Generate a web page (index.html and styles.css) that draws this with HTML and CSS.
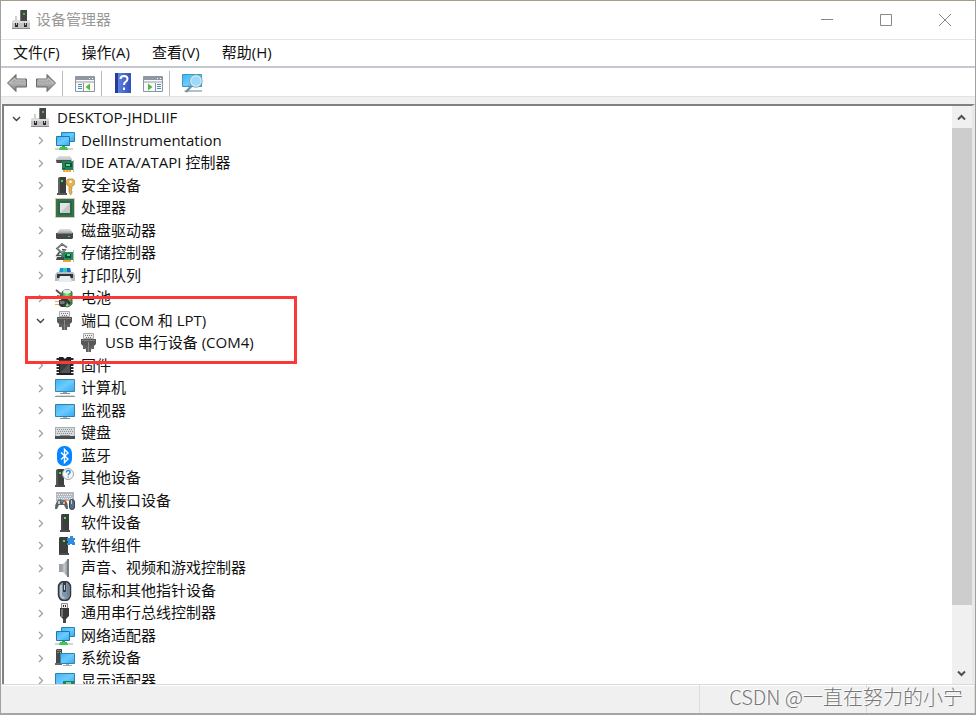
FILE: index.html
```html
<!DOCTYPE html>
<html lang="zh-CN">
<head>
<meta charset="utf-8">
<title>设备管理器</title>
<link rel="stylesheet" href="styles.css">
</head>
<body>
<svg class="sprite" aria-hidden="true">
  <defs>
    <linearGradient id="blue" x1="0" y1="0" x2="1" y2="1"><stop offset="0" stop-color="#3db4f6"/><stop offset=".5" stop-color="#6bcbff"/><stop offset="1" stop-color="#35a9f2"/></linearGradient>
    <linearGradient id="steel" x1="0" y1="0" x2="1" y2="0"><stop offset="0" stop-color="#7b8187"/><stop offset=".6" stop-color="#c3c8cc"/><stop offset="1" stop-color="#878d92"/></linearGradient>
    <linearGradient id="silver" x1="0" y1="0" x2="0" y2="1"><stop offset="0" stop-color="#e0e1e2"/><stop offset="1" stop-color="#a3a6a9"/></linearGradient>
    <linearGradient id="arrow" x1="0" y1="0" x2="0" y2="1"><stop offset="0" stop-color="#777"/><stop offset=".5" stop-color="#b5b5b5"/><stop offset="1" stop-color="#777"/></linearGradient>
    <linearGradient id="book" x1="0" y1="0" x2="1" y2="0"><stop offset="0" stop-color="#243c9c"/><stop offset=".2" stop-color="#5b80e2"/><stop offset="1" stop-color="#3152b8"/></linearGradient>
    <linearGradient id="leaf" x1="0" y1="0" x2="1" y2="0"><stop offset="0" stop-color="#2f9e31"/><stop offset=".5" stop-color="#8be886"/><stop offset="1" stop-color="#239026"/></linearGradient>
  </defs>
  <symbol id="i-root" viewBox="0 0 20 20">
    <path d="M3 6h2v5H3z" fill="#cfcfcf"/><path d="M1 10h16l1 3v6H0v-6z" fill="#c3c3c6"/><path d="M1 10h16l1 3H0z" fill="#dcdcde"/><path d="M0 18h18v1H0z" fill="#8b8b8d"/>
    <path d="M8 1l1-1h6v11H8z" fill="#454545"/><path d="M8 1l1-1v11H8z" fill="#777"/><path d="M11 3h2v2h-2z" fill="#31c14c"/>
    <path d="M3 13h1v2h1v-2h1v4H3zM12 13h1v2h1v-2h1v4h-3z" fill="#2c2c2c"/>
  </symbol>
  <symbol id="i-net" viewBox="0 0 20 20">
    <path d="M6.500 1.500h13v9h-13z" fill="url(#blue)" stroke="#2683b8"/>
    <path d="M1.500 5.500h13v9h-13z" fill="url(#blue)" stroke="#2277a8"/><path d="M7 15h3v2H7z" fill="#3ba940"/><path d="M0 17h18v2H0z" fill="#d2d4d5"/><path d="M5 16h7l1 3H4z" fill="#40c74a"/>
  </symbol>
  <symbol id="i-ide" viewBox="0 0 20 20">
    <path d="M1 6l3-3h11l2 3v4H1z" fill="url(#silver)"/><path d="M1 7h15v3H2z" fill="#4b4d4f"/><path d="M7 8h11v9H7z" fill="#21825b"/><path d="M18 7h1v12h-1z" fill="#b8bdb9"/><path d="M10 10h7v4h-7zM8 15h2v1H8z" fill="#075438"/><path d="M11 11h4v2h-4z" fill="#66d59a"/><path d="M8 17h8v2H8z" fill="#f4a228"/><path d="M10 17h1v2h-1zM13 17h1v2h-1z" fill="#fbd074"/>
  </symbol>
  <symbol id="i-security" viewBox="0 0 20 20">
    <path d="M3 2l2-1h6v17H3z" fill="#3d3d3e"/><path d="M4 2v15" stroke="#858585"/><path d="M6 4h2v2H6z" fill="#38e749"/><path d="M2 17h10v2H2z" fill="#575758"/><path d="M15.500 3a3.500 3.500 0 0 0-1.500 7v6l1.500 3 1.500-2v-2l-1-1 1-1v-3a3.500 3.500 0 0 0-1.500-7z" fill="#e5b354" stroke="#ad7c24" stroke-width=".6"/><circle cx="15.500" cy="5.800" r="1.300" fill="#fff"/>
  </symbol>
  <symbol id="i-cpu" viewBox="0 0 20 20">
    <path d="M.5.5h19v19H.5z" fill="#fff" stroke="#b99948" stroke-dasharray="1 1"/><path d="M1 1h18v18H1z" fill="#347152"/><path d="M3 3h14v14H3z" fill="#28674a"/><path d="M5 5h10v10H5z" fill="#e3e5e4"/><path d="M5 15L15 5v10z" fill="#c5cac7"/>
  </symbol>
  <symbol id="i-disk" viewBox="0 0 20 20">
    <path d="M2 12l3-4h10l3 4z" fill="url(#silver)"/><path d="M1 12h17v5l-1 1H2l-1-1z" fill="#454748"/><path d="M2 12h15v1H2z" fill="#77797b"/><path d="M13 15h2v1h-2z" fill="#38d653"/>
  </symbol>
  <symbol id="i-storage" viewBox="0 0 20 20">
    <path d="M12 4.500L7 1 2 5.500 7 10l3-3-3-.5M5 8.500l-3 4h4" fill="none" stroke="#505355" stroke-width="1.700"/><path d="M12 4.500L7 1 2 5.500 7 10l3-3" fill="none" stroke="#d7d9da" stroke-width=".5"/><path d="M6 12l3-3h9v8H6z" fill="#278b5c"/><path d="M18 7h1v12h-1z" fill="#b8bdb9"/><path d="M10 12l2-1h4v4h-6z" fill="#075438"/><path d="M12 11h3v2h-3z" fill="#65cf94"/><path d="M2 14h7v3H1z" fill="#45494b"/><path d="M8 17h8v2H8z" fill="#f4a228"/>
  </symbol>
  <symbol id="i-printer" viewBox="0 0 20 20">
    <path d="M5 2h10l1 5H4z" fill="#1497e5"/><path d="M8 2h4v5H8z" fill="#39c9a5"/><path d="M12 2h3l1 5h-4z" fill="#176ace"/><path d="M2 6h16l2 3v6H0V9z" fill="#b6bdc3"/><path d="M2 8h16v4H2z" fill="#2f3336"/><path d="M4 12h12v4H4z" fill="#4a5054"/><path d="M5 10h10l2 6H3z" fill="#e8edf0"/>
  </symbol>
  <symbol id="i-battery" viewBox="0 0 20 20">
    <path d="M7 4q5-5 10 0v12q-5 6-10 0z" fill="url(#leaf)" stroke="#53585a"/><ellipse cx="12" cy="3.500" rx="4" ry="2" fill="#e4edea"/><path d="M1 2l6 5M2 8l4 1" stroke="#555" stroke-width="2"/><path d="M5 7q6 1 11 8l-2 2q-5-6-8-5z" fill="#2f3a35"/><path d="M4 12h6l2 3-2 4H6l-2-2z" fill="#363a3c"/><path d="M5 13h4l1 1-1 2H5z" fill="#73797c"/><path d="M0 13h4v1H0zM0 16h4v1H0z" fill="#e4b34f"/>
  </symbol>
  <symbol id="i-port" viewBox="0 0 20 20">
    <path d="M4.500.5h10v5h-10z" fill="#ececec" stroke="#adadad"/><path d="M6 2h1v1H6zM8 2h1v1H8zM10 2h1v1h-1zM12 2h1v1h-1zM7 4h1v1H7zM9 4h1v1H9zM11 4h1v1h-1z" fill="#777"/><path d="M2 6h15v5l-2 2H4l-2-2z" fill="#575757"/><path d="M3 7h13v1H3z" fill="#818181"/><path d="M4 12h2v4H4zM13 12h2v4h-2zM6 13h7v2l-1 2v2H7v-2l-1-2z" fill="#606060"/><path d="M9 9h1v10H9z" fill="#8c8c8c"/>
  </symbol>
  <symbol id="i-firmware" viewBox="0 0 20 20">
    <path d="M3 2v18M17 2v18" stroke="#242628" stroke-width="3" stroke-dasharray="2 1"/><path d="M4 1h4l2 2 2-2h4v18H4z" fill="#1d2022"/><path d="M5 4h10v13H5z" fill="#3b3e40"/><path d="M5 17L15 7v10z" fill="#525557"/>
  </symbol>
  <symbol id="i-computer" viewBox="0 0 20 20">
    <path d="M.5 1.500h19v12H.5z" fill="url(#blue)" stroke="#3c86ac"/><path d="M8 14h4v1H8z" fill="#94a3ae"/><path d="M5 15h10v1H5z" fill="#83919a"/><path d="M1 17h18l1 2H0z" fill="#d3dbe1"/><path d="M0 18h20v1H0z" fill="#8797a2"/>
  </symbol>
  <symbol id="i-monitor" viewBox="0 0 20 20">
    <path d="M.5 3.500h19v12H.5z" fill="url(#blue)" stroke="#357da1"/><path d="M8 16h4v1H8z" fill="#acb5bc"/><path d="M5 17h10v1H5z" fill="#7796a8"/>
  </symbol>
  <symbol id="i-keyboard" viewBox="0 0 20 20">
    <path d="M0 4h20v12H0z" fill="#a9aeb2"/><path d="M1 5h18v8H1z" fill="#d8dadb"/><path d="M2 6.500h16M3 8.500h15M2 10.500h16" stroke="#8d9296" stroke-dasharray="1 1"/><path d="M5 12h10v1H5z" fill="#898d90"/><path d="M0 13h20v3H0z" fill="#4a4e51"/>
  </symbol>
  <symbol id="i-bluetooth" viewBox="0 0 20 20">
    <rect x="2" width="15" height="20" rx="7" fill="#0787ff"/><path d="M6 6.500l7 6.500-3.500 3.500v-13L13 7l-7 6.500" fill="none" stroke="#fff" stroke-width="1.400"/>
  </symbol>
  <symbol id="i-other" viewBox="0 0 20 20">
    <path d="M1 2l2-1h6v17H1z" fill="#404041"/><path d="M2 2v15" stroke="#6f7070"/><path d="M4 4h2v2H4z" fill="#36e54d"/><path d="M0 17h10v2H0z" fill="#4a4b4c"/><circle cx="13" cy="6" r="5.500" fill="#f5f7f8" stroke="#9ca5aa"/><path d="M11.300 4.500q.1-2 1.900-2 2 0 2 1.600 0 1-1.200 1.700-.8.5-.8 1.500M13.200 8.400v1.200" fill="none" stroke="#268ac8" stroke-width="1.300"/>
  </symbol>
  <symbol id="i-hid" viewBox="0 0 20 20">
    <path d="M1 1h18v9H1z" fill="#b3b9be"/><path d="M2 3.500h16M3 5.500h14M2 7.500h16" stroke="#edf0f1" stroke-dasharray="1 1"/><path d="M2 10q2-3 9 0 2 2 2 8h-2l-2-4H4l-2 4H0q0-5 2-8z" fill="#5b636a"/><path d="M3 10h2v3H3z" fill="#c3c9ce"/><path d="M6 9h2v2H6z" fill="#269ae0"/><path d="M9 9h2v2H9z" fill="#ed4d46"/><path d="M8 11h2v2H8z" fill="#efbd2e"/><rect x="14.500" y="8.500" width="5" height="10" rx="2.500" fill="#596f83" stroke="#394149"/><path d="M16 9h1v4h-1z" fill="#bccbd8"/>
  </symbol>
  <symbol id="i-tower" viewBox="0 0 20 20">
    <path d="M6 2l1-1h7v17H6z" fill="#3c3d3d"/><path d="M7 2v15" stroke="#565656"/><path d="M9 4h2v2H9z" fill="#43ed45"/><path d="M5 17h10v2H5z" fill="#4d4e4e"/>
  </symbol>
  <symbol id="i-component" viewBox="0 0 20 20">
    <path d="M4 2l1-1h8v17H4z" fill="#3c3d3d"/><path d="M8 4h2v2H8z" fill="#43ed45"/><path d="M4 17h10v2H4z" fill="#4d4e4e"/><path d="M12 2h3V0h3v2h2v2h-1v2h1v3h-3V8h-2v1h-3V7h1V5h-1z" fill="#2f8ddd"/>
  </symbol>
  <symbol id="i-speaker" viewBox="0 0 20 20">
    <path d="M4 6h4l5-5v18l-5-5H4z" fill="url(#steel)"/><path d="M4 6h3v8H4z" fill="#999fa4"/><path d="M12 1h2v18h-2z" fill="#777d82"/>
  </symbol>
  <symbol id="i-mouse" viewBox="0 0 20 20">
    <rect x="3.500" y=".5" width="12" height="19" rx="5.500" fill="#8195a8" stroke="#34393f" stroke-width="1.500"/><path d="M6 4v10q1 3 3.500 3" fill="none" stroke="#b6c4d0" stroke-width="2"/><path d="M8 1h3v10H8z" fill="#333c45"/><path d="M9 4h1v5H9z" fill="#c6d3de"/><path d="M12 3h2v11l-2 3z" fill="#6c8297"/>
  </symbol>
  <symbol id="i-usb" viewBox="0 0 20 20">
    <path d="M6.500.5h6v5h-6z" fill="#eee" stroke="#929292"/><path d="M8 2h1v2H8zM10 2h1v2h-1z" fill="#333"/><path d="M5 5h9v8l-3 3H8l-3-3z" fill="#393a3b"/><path d="M6 6h2v8H6z" fill="#747576"/><path d="M8 16h3v4H8z" fill="#474849"/>
  </symbol>
  <symbol id="i-system" viewBox="0 0 20 20">
    <path d="M1 2l1-1h5v15H1z" fill="#48494b"/><path d="M2 2h4v1H2zM2 4h2v1H2z" fill="#858789"/><path d="M5 4h1v1H5z" fill="#49e25e"/><path d="M0 15h7v2H0z" fill="#626668"/><path d="M5.500 5.500h14v10h-14z" fill="url(#blue)" stroke="#3782aa"/><path d="M11 16h3v1h-3zM8 17h9v1H8z" fill="#9bb0bc"/>
  </symbol>
  <symbol id="i-display" viewBox="0 0 20 20">
    <path d="M.5 2.500h19v12H.5z" fill="url(#blue)" stroke="#387ea3"/><path d="M8 10h11v7H8z" fill="#238356"/><path d="M11 11h5v3h-5z" fill="#7cc7a0"/>
  </symbol>
  <symbol id="i-down" viewBox="0 0 9 9"><path d="M1 3l3.500 3.500L8 3" fill="none" stroke="#404040" stroke-width="1.400"/></symbol>
  <symbol id="i-right" viewBox="0 0 9 9"><path d="M3 1l3.500 3.500L3 8" fill="none" stroke="#a0a0a0" stroke-width="1.300"/></symbol>
</svg>

<main class="window">
  <header class="titlebar">
    <svg class="icon"><use href="#i-root"/></svg>
    <h1>设备管理器</h1>
    <div class="controls">
      <button aria-label="最小化"><svg viewBox="0 0 12 12"><path d="M0 5.500h12"/></svg></button>
      <button aria-label="最大化"><svg viewBox="0 0 12 12"><path d="M.5.5h11v11H.5z"/></svg></button>
      <button aria-label="关闭"><svg viewBox="0 0 12 12"><path d="M0 0l12 12M12 0L0 12"/></svg></button>
    </div>
  </header>
  <nav class="menubar">
    <button>文件(F)</button><button>操作(A)</button><button>查看(V)</button><button>帮助(H)</button>
  </nav>
  <div class="toolbar" role="toolbar">
    <button aria-label="后退"><svg viewBox="0 0 20 20"><path d="M.5 10L9 1.500V6h10.500v8H9v4.500z" fill="url(#arrow)" stroke="#686868"/><path d="M3 10l5-5v2h10" fill="none" stroke="#c7c7c7"/></svg></button>
    <button aria-label="前进"><svg viewBox="0 0 20 20"><path d="M19.500 10L11 1.500V6H.5v8H11v4.500z" fill="url(#arrow)" stroke="#686868"/><path d="M2 7h10V5l5 5" fill="none" stroke="#c7c7c7"/></svg></button>
    <span class="separator"></span>
    <button aria-label="显示/隐藏控制台树"><svg viewBox="0 0 20 20"><path d="M.5 3.500h19v15H.5z" fill="#f8f9fa" stroke="#8d959e"/><path d="M1 4h18v3H1z" fill="#8f98a3"/><path d="M14 5h1v1h-1zM17 5h1v1h-1z" fill="#fff"/><path d="M1 8h18v2H1z" fill="#c5cbd0"/><path d="M8.500 10v8" stroke="#8b949f"/><path d="M3 11.500h4M3 13.500h4M3 15.500h4" stroke="#5389b5"/><path d="M15 10.500v7L10.500 14z" fill="#55b837"/></svg></button>
    <span class="separator"></span>
    <button aria-label="帮助"><svg viewBox="0 0 20 20"><path d="M1 0h16v20H1z" fill="url(#book)"/><path d="M1 0h3v20H1z" fill="#253d96"/><path d="M6.500 6q0-3 3.500-3t3.500 2.800q0 2-2 3.200-1.500.8-1.500 3M10 14.500v2.500" fill="none" stroke="#fff" stroke-width="2"/></svg></button>
    <button aria-label="操作窗格"><svg viewBox="0 0 20 20"><path d="M.5 3.500h19v15H.5z" fill="#f8f9fa" stroke="#8d959e"/><path d="M1 4h18v3H1z" fill="#8f98a3"/><path d="M14 5h1v1h-1zM17 5h1v1h-1z" fill="#fff"/><path d="M1 8h18v2H1z" fill="#c5cbd0"/><path d="M12.500 10v8" stroke="#8b949f"/><path d="M14 11.500h4M14 13.500h4M14 15.500h4" stroke="#5389b5"/><path d="M5 10.500v7l4.500-3.500z" fill="#55b837"/></svg></button>
    <span class="separator"></span>
    <button aria-label="扫描检测硬件改动"><svg class="scan" viewBox="0 0 22 20"><path d="M.5 1.500h19v12H.5z" fill="url(#blue)" stroke="#3c99c3"/><path d="M3 17h17v2H2z" fill="#b5c1ca"/><circle cx="14" cy="8" r="5.500" fill="#9bdafa" stroke="#dce9ef" stroke-width="1.500"/><circle cx="14" cy="8" r="6.300" fill="none" stroke="#5296b3" stroke-width=".7"/><path d="M9.500 13L4 19" stroke="#6c8fa3" stroke-width="2.200"/></svg></button>
  </div>
  <div class="band"></div>
  <section class="panel">
    <div class="view">
      <ul class="tree">
        <li class="root"><button aria-label="折叠"><svg><use href="#i-down"/></svg></button><svg class="icon"><use href="#i-root"/></svg><span>DESKTOP-JHDLIIF</span></li>
        <li><button aria-label="展开"><svg><use href="#i-right"/></svg></button><svg class="icon"><use href="#i-net"/></svg><span>DellInstrumentation</span></li>
        <li><button aria-label="展开"><svg><use href="#i-right"/></svg></button><svg class="icon"><use href="#i-ide"/></svg><span>IDE ATA/ATAPI 控制器</span></li>
        <li><button aria-label="展开"><svg><use href="#i-right"/></svg></button><svg class="icon"><use href="#i-security"/></svg><span>安全设备</span></li>
        <li><button aria-label="展开"><svg><use href="#i-right"/></svg></button><svg class="icon"><use href="#i-cpu"/></svg><span>处理器</span></li>
        <li><button aria-label="展开"><svg><use href="#i-right"/></svg></button><svg class="icon"><use href="#i-disk"/></svg><span>磁盘驱动器</span></li>
        <li><button aria-label="展开"><svg><use href="#i-right"/></svg></button><svg class="icon"><use href="#i-storage"/></svg><span>存储控制器</span></li>
        <li><button aria-label="展开"><svg><use href="#i-right"/></svg></button><svg class="icon"><use href="#i-printer"/></svg><span>打印队列</span></li>
        <li><button aria-label="展开"><svg><use href="#i-right"/></svg></button><svg class="icon"><use href="#i-battery"/></svg><span>电池</span></li>
        <li><button aria-label="折叠"><svg><use href="#i-down"/></svg></button><svg class="icon"><use href="#i-port"/></svg><span>端口 (COM 和 LPT)</span></li>
        <li class="leaf"><i></i><svg class="icon"><use href="#i-port"/></svg><span>USB 串行设备 (COM4)</span></li>
        <li><button aria-label="展开"><svg><use href="#i-right"/></svg></button><svg class="icon"><use href="#i-firmware"/></svg><span>固件</span></li>
        <li><button aria-label="展开"><svg><use href="#i-right"/></svg></button><svg class="icon"><use href="#i-computer"/></svg><span>计算机</span></li>
        <li><button aria-label="展开"><svg><use href="#i-right"/></svg></button><svg class="icon"><use href="#i-monitor"/></svg><span>监视器</span></li>
        <li><button aria-label="展开"><svg><use href="#i-right"/></svg></button><svg class="icon"><use href="#i-keyboard"/></svg><span>键盘</span></li>
        <li><button aria-label="展开"><svg><use href="#i-right"/></svg></button><svg class="icon"><use href="#i-bluetooth"/></svg><span>蓝牙</span></li>
        <li><button aria-label="展开"><svg><use href="#i-right"/></svg></button><svg class="icon"><use href="#i-other"/></svg><span>其他设备</span></li>
        <li><button aria-label="展开"><svg><use href="#i-right"/></svg></button><svg class="icon"><use href="#i-hid"/></svg><span>人机接口设备</span></li>
        <li><button aria-label="展开"><svg><use href="#i-right"/></svg></button><svg class="icon"><use href="#i-tower"/></svg><span>软件设备</span></li>
        <li><button aria-label="展开"><svg><use href="#i-right"/></svg></button><svg class="icon"><use href="#i-component"/></svg><span>软件组件</span></li>
        <li><button aria-label="展开"><svg><use href="#i-right"/></svg></button><svg class="icon"><use href="#i-speaker"/></svg><span>声音、视频和游戏控制器</span></li>
        <li><button aria-label="展开"><svg><use href="#i-right"/></svg></button><svg class="icon"><use href="#i-mouse"/></svg><span>鼠标和其他指针设备</span></li>
        <li><button aria-label="展开"><svg><use href="#i-right"/></svg></button><svg class="icon"><use href="#i-usb"/></svg><span>通用串行总线控制器</span></li>
        <li><button aria-label="展开"><svg><use href="#i-right"/></svg></button><svg class="icon"><use href="#i-net"/></svg><span>网络适配器</span></li>
        <li><button aria-label="展开"><svg><use href="#i-right"/></svg></button><svg class="icon"><use href="#i-system"/></svg><span>系统设备</span></li>
        <li><button aria-label="展开"><svg><use href="#i-right"/></svg></button><svg class="icon"><use href="#i-display"/></svg><span>显示适配器</span></li>
      </ul>
      <div class="highlight"></div>
    </div>
    <div class="scrollbar">
      <button aria-label="向上滚动"><svg viewBox="0 0 9 9"><path d="M1 6.500L4.500 3 8 6.500"/></svg></button>
      <div class="track"><div class="thumb"></div></div>
      <button aria-label="向下滚动"><svg viewBox="0 0 9 9"><path d="M1 2.500L4.500 6 8 2.500"/></svg></button>
    </div>
  </section>
  <footer class="statusbar"><div></div><div></div><div></div></footer>
  <div class="watermark">CSDN @一直在努力的小宁</div>
</main>
</body>
</html>
```

FILE: styles.css
```css
* { box-sizing: border-box; }

body {
  margin: 0;
  color: #111;
  font: 15px/20px "Open Sans", "Noto Sans CJK SC", sans-serif;
}

button {
  display: flex;
  align-items: center;
  justify-content: center;
  padding: 0;
  border: 0;
  background: none;
  color: inherit;
  font: inherit;
}

svg { display: block; flex: none; }
.sprite { position: absolute; width: 0; height: 0; }
.icon { width: 20px; height: 20px; }

.window {
  position: relative;
  display: flex;
  flex-direction: column;
  height: 100vh;
  overflow: hidden;
  border: 1px solid #a0a0a0;
  border-top-color: #a89c87;
  border-bottom: 2px solid #a5a5a5;
  background: #fff;
}

.titlebar {
  display: flex;
  align-items: center;
  height: 39px;
  padding: 0 1px 0 11px;
  border-bottom: 1px solid #e5e5e5;
}
.titlebar h1 {
  flex: 1;
  margin: 0 0 2px 4px;
  color: #999;
  font-size: 15px;
  font-weight: 400;
}
.controls { display: flex; }
.controls button { width: 59px; height: 38px; }
.controls svg { width: 12px; height: 12px; fill: none; stroke: #888; }

.menubar {
  display: flex;
  gap: 22px;
  height: 28px;
  padding: 0 0 2px 12px;
  border-bottom: 2px solid #c4c9d0;
}

.toolbar {
  display: flex;
  align-items: center;
  gap: 9px;
  height: 29px;
  padding: 2px 0 0 6px;
  border-bottom: 1px solid #e3e3e3;
}
.toolbar svg { width: 20px; height: 20px; }
.toolbar .scan { width: 22px; }
.separator { width: 1px; height: 25px; margin: 0 3px 0 -3px; background: #b9b9b9; }

.band { height: 7px; background: #f0f0f0; }

.panel {
  display: flex;
  flex: 1;
  min-height: 0;
  margin-left: 1px;
  border: 2px solid #808080;
  border-right: 3px solid #e8e8e8;
  border-bottom: 0;
}
.view { position: relative; flex: 1; overflow: hidden; }

.tree { margin: 0; padding: 1px 0 0; list-style: none; }
.tree li {
  display: flex;
  align-items: center;
  height: 23px;
  padding-left: 25px;
}
.tree li:nth-child(odd) { height: 22px; }
.tree .root { padding-left: 1px; }
.tree .leaf { padding-left: 49px; }
.tree button, .tree i { width: 22px; height: 20px; }
.tree button svg { width: 9px; height: 9px; }
.tree .icon { margin: 0 6px 0 4px; }
.tree span { padding-bottom: 2px; white-space: nowrap; }

.highlight {
  position: absolute;
  top: 190px;
  left: 21px;
  width: 272px;
  height: 68px;
  border: 3px solid #fc3737;
}

.scrollbar {
  display: flex;
  flex-direction: column;
  width: 20px;
  background: #f0f0f0;
}
.scrollbar button { width: 19px; height: 22px; }
.scrollbar svg { width: 9px; height: 9px; fill: none; stroke: #505050; stroke-width: 2; }
.track { display: flex; flex: 1; flex-direction: column; }
.track::after { flex: 3; content: ""; }
.thumb { flex: 25; background: #cdcdcd; }

.statusbar {
  display: flex;
  height: 29px;
  border-top: 1px solid #d9d9d9;
  background: #f0f0f0;
  box-shadow: inset 0 1px #fff;
}
.statusbar div { flex: 699; border-right: 1px solid #dcdcdc; }
.statusbar div:nth-child(2) { flex: 166; }
.statusbar div:nth-child(3) { flex: 107; }

.watermark {
  position: absolute;
  right: 12px;
  bottom: 2px;
  color: #777;
  font: 300 20px/28px "Noto Sans CJK SC", sans-serif;
  text-shadow: -1px -1px #fff;
}
```
